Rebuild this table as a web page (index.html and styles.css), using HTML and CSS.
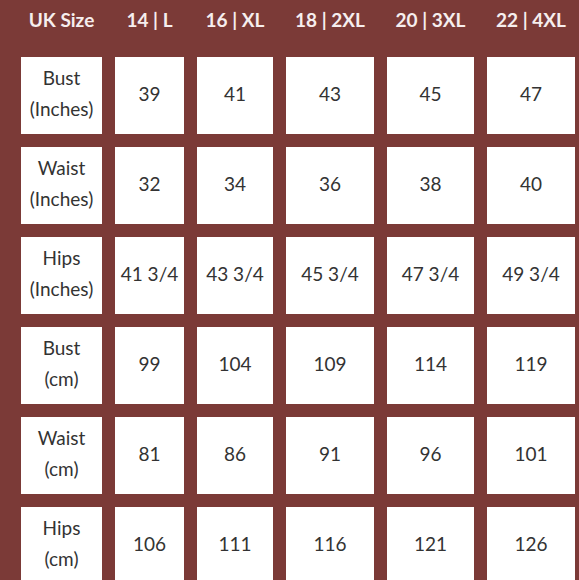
FILE: index.html
```html
<!DOCTYPE html>
<html lang="en">
<head>
<meta charset="utf-8">
<title>Size Chart</title>
<link rel="stylesheet" href="styles.css">
</head>
<body>
<div class="chart">
  <div class="head">UK Size</div>
  <div class="head">14 | L</div>
  <div class="head">16 | XL</div>
  <div class="head">18 | 2XL</div>
  <div class="head">20 | 3XL</div>
  <div class="head">22 | 4XL</div>

  <div class="cell">Bust<br>(Inches)</div>
  <div class="cell">39</div><div class="cell">41</div><div class="cell">43</div><div class="cell">45</div><div class="cell">47</div>

  <div class="cell">Waist<br>(Inches)</div>
  <div class="cell">32</div><div class="cell">34</div><div class="cell">36</div><div class="cell">38</div><div class="cell">40</div>

  <div class="cell">Hips<br>(Inches)</div>
  <div class="cell">41 3/4</div><div class="cell">43 3/4</div><div class="cell">45 3/4</div><div class="cell">47 3/4</div><div class="cell">49 3/4</div>

  <div class="cell">Bust<br>(cm)</div>
  <div class="cell">99</div><div class="cell">104</div><div class="cell">109</div><div class="cell">114</div><div class="cell">119</div>

  <div class="cell">Waist<br>(cm)</div>
  <div class="cell">81</div><div class="cell">86</div><div class="cell">91</div><div class="cell">96</div><div class="cell">101</div>

  <div class="cell">Hips<br>(cm)</div>
  <div class="cell">106</div><div class="cell">111</div><div class="cell">116</div><div class="cell">121</div><div class="cell">126</div>
</div>
</body>
</html>
```

FILE: styles.css
```css
html, body {
  margin: 0;
  padding: 0;
  background: #7b3a37;
  overflow: hidden;
}

.chart {
  display: grid;
  grid-template-columns: 81px 69px 76px 88px 87px 88px;
  grid-template-rows: 44px repeat(6, 77px);
  column-gap: 13px;
  row-gap: 13px;
  padding-left: 21px;
  font-family: Lato, "Open Sans", sans-serif;
}

.head {
  display: flex;
  align-items: center;
  justify-content: center;
  padding-bottom: 5px;
  color: #f6eeee;
  font-weight: 700;
  font-size: 19px;
  white-space: nowrap;
}

.cell {
  display: flex;
  align-items: center;
  justify-content: center;
  text-align: center;
  padding-bottom: 5px;
  background: #ffffff;
  color: #333333;
  font-size: 19px;
  line-height: 31px;
  white-space: nowrap;
}
```
